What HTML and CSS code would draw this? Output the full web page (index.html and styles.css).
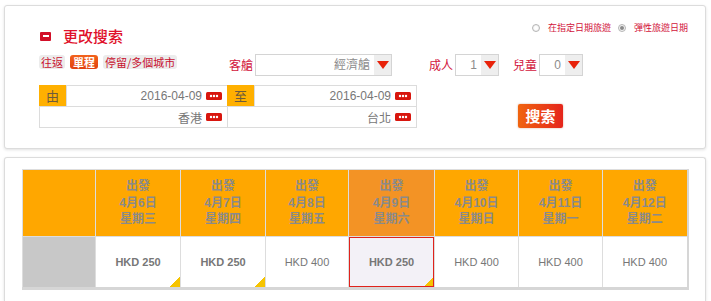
FILE: index.html
```html
<!DOCTYPE html>
<html lang="zh-Hant">
<head>
<meta charset="utf-8">
<title>更改搜索</title>
<link rel="stylesheet" href="styles.css">
</head>
<body>
<div class="panel search">
  <div class="row-a">
    <div class="title"><span class="minus"></span>更改搜索</div>
    <div class="radios">
      <span class="radio"></span><span class="rlabel">在指定日期旅遊</span>
      <span class="radio checked"></span><span class="rlabel">彈性旅遊日期</span>
    </div>
  </div>
  <div class="row-b">
    <div class="tabs">
      <span class="tab">往返</span>
      <span class="tab active">單程</span>
      <span class="tab">停留/多個城市</span>
    </div>
    <div class="field">
      <span class="flabel">客艙</span>
      <div class="select wide"><span class="val">經濟艙</span><span class="arrow"><span class="tri"></span></span></div>
    </div>
    <div class="field adults">
      <span class="flabel">成人</span>
      <div class="select small"><span class="val">1</span><span class="arrow"><span class="tri"></span></span></div>
    </div>
    <div class="field kids">
      <span class="flabel">兒童</span>
      <div class="select small"><span class="val">0</span><span class="arrow"><span class="tri"></span></span></div>
    </div>
  </div>
  <div class="row-c">
    <div class="dates">
      <div class="half">
        <div class="drow"><span class="tag">由</span><span class="dval">2016-04-09<svg class="cal" width="16" height="8" viewBox="0 0 16 8"><rect width="16" height="8" rx="1.5" fill="#d8160e"/><circle cx="5" cy="4" r="1.2" fill="#fff"/><circle cx="8" cy="4" r="1.2" fill="#fff"/><circle cx="11" cy="4" r="1.2" fill="#fff"/></svg></span></div>
        <div class="drow"><span class="dval">香港<svg class="cal" width="16" height="8" viewBox="0 0 16 8"><rect width="16" height="8" rx="1.5" fill="#d8160e"/><circle cx="5" cy="4" r="1.2" fill="#fff"/><circle cx="8" cy="4" r="1.2" fill="#fff"/><circle cx="11" cy="4" r="1.2" fill="#fff"/></svg></span></div>
      </div>
      <div class="half">
        <div class="drow"><span class="tag">至</span><span class="dval">2016-04-09<svg class="cal" width="16" height="8" viewBox="0 0 16 8"><rect width="16" height="8" rx="1.5" fill="#d8160e"/><circle cx="5" cy="4" r="1.2" fill="#fff"/><circle cx="8" cy="4" r="1.2" fill="#fff"/><circle cx="11" cy="4" r="1.2" fill="#fff"/></svg></span></div>
        <div class="drow"><span class="dval">台北<svg class="cal" width="16" height="8" viewBox="0 0 16 8"><rect width="16" height="8" rx="1.5" fill="#d8160e"/><circle cx="5" cy="4" r="1.2" fill="#fff"/><circle cx="8" cy="4" r="1.2" fill="#fff"/><circle cx="11" cy="4" r="1.2" fill="#fff"/></svg></span></div>
      </div>
    </div>
    <button class="search-btn">搜索</button>
  </div>
</div>

<div class="panel results">
  <table class="fares">
    <colgroup>
      <col style="width:73px"><col style="width:85px"><col style="width:85px"><col style="width:83px"><col style="width:86px"><col style="width:84px"><col style="width:84px"><col style="width:85px">
    </colgroup>
    <thead>
      <tr>
        <th></th>
        <th>出發<br>4月6日<br>星期三</th>
        <th>出發<br>4月7日<br>星期四</th>
        <th>出發<br>4月8日<br>星期五</th>
        <th class="sel">出發<br>4月9日<br>星期六</th>
        <th>出發<br>4月10日<br>星期日</th>
        <th>出發<br>4月11日<br>星期一</th>
        <th>出發<br>4月12日<br>星期二</th>
      </tr>
    </thead>
    <tbody>
      <tr>
        <td class="blank"></td>
        <td class="low">HKD 250</td>
        <td class="low">HKD 250</td>
        <td>HKD 400</td>
        <td class="low sel">HKD 250</td>
        <td>HKD 400</td>
        <td>HKD 400</td>
        <td>HKD 400</td>
      </tr>
    </tbody>
  </table>
</div>
</body>
</html>
```

FILE: styles.css
```css
html, body {
  margin: 0;
  padding: 0;
  background: #fff;
  font-family: "Liberation Sans", "Noto Sans CJK TC", sans-serif;
  overflow: hidden;
}

.panel {
  background: #fff;
  border: 1px solid #dcdcdc;
  border-radius: 3px;
  box-shadow: 0 1px 3px rgba(0, 0, 0, 0.12);
  margin-left: 4px;
  margin-right: 5px;
  box-sizing: border-box;
}

.search {
  margin-top: 5px;
  height: 144px;
  padding: 16px 17px 0 34px;
}

.row-a {
  display: flex;
  justify-content: space-between;
  align-items: flex-start;
  height: 32px;
}

.title {
  margin-top: 4px;
  display: flex;
  align-items: center;
  font-size: 15px;
  line-height: 20px;
  color: #e0102a;
  font-weight: 500;
  font-family: "Noto Sans CJK TC", sans-serif;
}

.minus {
  width: 11px;
  height: 9px;
  margin-left: 1px;
  margin-right: 12px;
  background: #d20f28;
  border-radius: 1px;
  display: flex;
  align-items: center;
  justify-content: center;
}

.minus::before {
  content: "";
  width: 6px;
  height: 2px;
  background: #fff;
}

.radios {
  display: flex;
  align-items: center;
  height: 11px;
  font-size: 9px;
  line-height: 11px;
  color: #d2143c;
  font-family: "Noto Sans CJK TC", sans-serif;
}

.radio {
  width: 8px;
  height: 8px;
  box-sizing: border-box;
  border: 1px solid #b5b5b5;
  border-radius: 50%;
  background: radial-gradient(circle, #fff 30%, #e6e6e6 100%);
  margin-right: 8px;
  display: flex;
  align-items: center;
  justify-content: center;
}

.radio.checked {
  margin-left: 7px;
}

.radio.checked::before {
  content: "";
  width: 4px;
  height: 4px;
  border-radius: 50%;
  background: #8a8a8a;
}

.row-b {
  display: flex;
  align-items: center;
  height: 22px;
}

.tabs {
  width: 190px;
  align-self: flex-start;
  margin-top: 1px;
  display: flex;
  gap: 5px;
}

.tab {
  font-size: 11px;
  line-height: 14px;
  padding: 0 2px;
  background: #ececec;
  border-radius: 3px;
  color: #c8102e;
  font-family: "Noto Sans CJK TC", sans-serif;
}

.tab.active {
  background: linear-gradient(#f2621c, #e2400f);
  color: #fff;
  font-weight: bold;
  padding: 0 3px;
}

.field {
  display: flex;
  align-items: center;
}

.flabel {
  font-size: 12px;
  line-height: 16px;
  color: #d2143c;
  margin-right: 2px;
  font-family: "Noto Sans CJK TC", sans-serif;
}

.adults {
  margin-left: 37px;
}

.kids {
  margin-left: 14px;
}

.select {
  height: 22px;
  box-sizing: border-box;
  border: 1px solid #d4d4d4;
  background: #fff;
  display: flex;
  justify-content: flex-end;
  align-items: stretch;
}

.select.wide {
  width: 137px;
}

.select.small {
  width: 44px;
}

.val {
  font-size: 12px;
  line-height: 20px;
  color: #8c8c8c;
  padding-right: 4px;
  font-family: "Liberation Sans", "Noto Sans CJK TC", sans-serif;
}

.arrow {
  width: 17px;
  background: #eeeeee;
  display: flex;
  align-items: center;
  justify-content: center;
}

.tri {
  width: 0;
  height: 0;
  border-left: 6px solid transparent;
  border-right: 6px solid transparent;
  border-top: 8px solid #e8220a;
}

.row-c {
  display: flex;
  align-items: flex-start;
  margin-top: 9px;
}

.dates {
  display: grid;
  grid-template-columns: 189px 189px;
}

.half {
  border: 1px solid #dcdcdc;
}

.half + .half {
  border-left: none;
}

.drow {
  display: flex;
  height: 20px;
}

.drow + .drow {
  border-top: 1px solid #dcdcdc;
}

.tag {
  width: 27px;
  margin: -1px 0 0 -1px;
  height: 21px;
  background: #ffb000;
  color: #6e5b3c;
  font-size: 13px;
  line-height: 21px;
  text-align: center;
  border-right: 1px solid #dcdcdc;
  font-family: "Noto Sans CJK TC", sans-serif;
}

.dval {
  flex: 1;
  display: flex;
  justify-content: flex-end;
  align-items: center;
  gap: 4px;
  padding-right: 5px;
  font-size: 12px;
  color: #777;
}

.cal {
  display: block;
}

.search-btn {
  margin-left: 101px;
  margin-top: 19px;
  width: 45px;
  height: 24px;
  padding: 0;
  border: none;
  border-radius: 2px;
  background: linear-gradient(to right, #f0640f, #e5251b);
  box-shadow: 0 0 2px rgba(180, 80, 30, 0.5);
  color: #fff;
  font-size: 15px;
  font-weight: bold;
  line-height: 24px;
  font-family: "Noto Sans CJK TC", sans-serif;
}

.results {
  margin-top: 8px;
  height: 144px;
  padding: 11px 0 0 17px;
  border-bottom: none;
  border-bottom-left-radius: 0;
  border-bottom-right-radius: 0;
}

.fares {
  border-collapse: collapse;
  table-layout: fixed;
  width: 665px;
  border-right: 2px solid #d6d6d6;
  border-bottom: 3px solid #d6d6d6;
}

.fares th,
.fares td {
  border: 1px solid #dddddd;
  padding: 0;
  text-align: center;
}

.fares th {
  height: 66px;
  background: #ffa700;
  color: #8a8a8a;
  font-size: 12px;
  line-height: 16.5px;
  font-weight: bold;
  font-family: "Liberation Sans", "Noto Sans CJK TC", sans-serif;
}

.fares th.sel {
  background: #f39325;
}

.fares td {
  height: 50px;
  font-size: 11px;
  color: #777;
  background: #fff;
}

.fares td.blank {
  background: #c8c8c8;
}

.fares td.low {
  font-weight: bold;
  background: linear-gradient(to bottom right, transparent 50%, #f6c400 50%) no-repeat right bottom / 10px 10px, #fff;
}

.fares td.low.sel {
  background: linear-gradient(to bottom right, transparent 50%, #f6c400 50%) no-repeat right bottom / 10px 10px, #f3f1f7;
  box-shadow: inset 0 0 0 1px #e0231c;
}
```
